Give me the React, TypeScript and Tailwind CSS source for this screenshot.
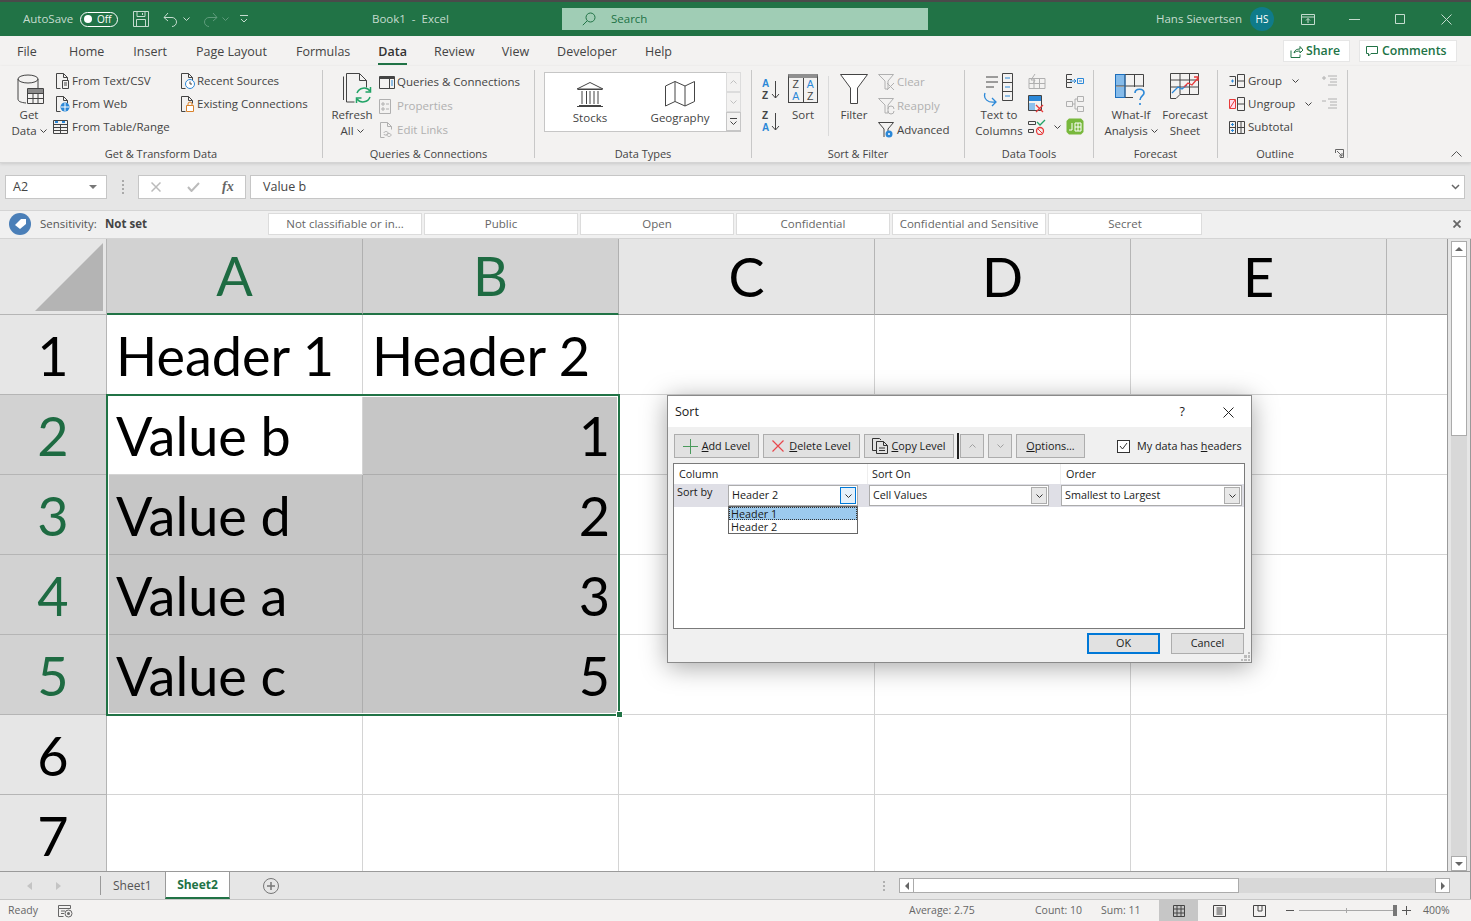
import React from "react";

/* ── small drawing helpers ───────────────────────────── */

type IcoProps = { w?: number; h?: number; children: React.ReactNode; className?: string };

const Ico = ({ w = 16, h = 16, children, className }: IcoProps) => (
  <svg width={w} height={h} viewBox={`0 0 ${w} ${h}`} fill="none" className={"shrink-0 " + (className ?? "")}>
    {children}
  </svg>
);

const Chev = ({ color = "#444", up = false }: { color?: string; up?: boolean }) => (
  <svg width="7" height="4" viewBox="0 0 7 4" fill="none" className="inline-block shrink-0 align-middle">
    <path d={up ? "M.5 3.5 3.5.5l3 3" : "M.5.5l3 3 3-3"} stroke={color} />
  </svg>
);

const DK = "#444";
const DIS = "#b0b0b0";
const BLUE = "#2b88d8";

const Doc = ({ c = DK }: { c?: string }) => <path d="M1.5 15.5v-15h7l4 4v3M8.5.5v4h4M1.5 15.5h4" stroke={c} />;

/* ── ribbon pieces ───────────────────────────────────── */

const Group = ({ width, label, children, labelPad }: { width: number; label: string; children: React.ReactNode; labelPad?: boolean }) => (
  <>
    <div className="flex flex-col shrink-0 relative" style={{ width }}>
      <div className="h-[80px] pt-1 flex">{children}</div>
      <div className={"leading-[16px] text-center text-[11px] text-[#444] " + (labelPad ? "pr-[15px]" : "")}>{label}</div>
    </div>
    <div className="w-px h-[88px] mt-1 bg-[#c8c8c8] shrink-0" />
  </>
);

const Big = ({ icon, lines, chev, width, className, iconH = 37 }: { icon: React.ReactNode; lines: string[]; chev?: boolean; width: number; className?: string; iconH?: number }) => (
  <div className={"flex flex-col items-center shrink-0 " + (className ?? "")} style={{ width }}>
    <div className="flex items-start justify-center" style={{ height: iconH }}>{icon}</div>
    {lines.map((l, i) => (
      <div key={l} className="leading-[16px] text-[11.5px] text-[#444] whitespace-nowrap flex items-center gap-[3px]">
        {l}
        {chev && i === lines.length - 1 && <Chev />}
      </div>
    ))}
  </div>
);

const Small = ({ icon, text, off, tall, iconW = 19 }: { icon: React.ReactNode; text: string; off?: boolean; tall?: boolean; iconW?: number }) => (
  <div className={"flex items-center text-[11.5px] whitespace-nowrap " + (tall ? "h-[24px] " : "h-[23px] ") + (off ? "text-[#b0b0b0]" : "text-[#444]")}>
    <div className="shrink-0 flex items-center" style={{ width: iconW }}>{icon}</div>
    {text}
  </div>
);

const TAB_NAMES = [
  { name: "Home", cls: "" },
  { name: "Insert", cls: "ml-[1px]" },
  { name: "Page Layout", cls: "ml-[1px]" },
  { name: "Formulas", cls: "ml-[1px]" },
  { name: "Data", cls: "" },
  { name: "Review", cls: "-ml-[1px]" },
  { name: "View", cls: "-ml-[1px]" },
  { name: "Developer", cls: "" },
  { name: "Help", cls: "" },
];
const LEVELS = ["Not classifiable or in...", "Public", "Open", "Confidential", "Confidential and Sensitive", "Secret"];

/* ── title bar ───────────────────────────────────────── */

function TitleBar() {
  return (
    <div className="h-[36px] shrink-0 bg-[#217346] border-t-2 border-[#4a4a4a] flex items-center text-[11.5px] text-[#c5dccf]">
      <span className="ml-[23px] w-[57px]">AutoSave</span>
      <div className="w-[38px] h-[15px] rounded-full border border-white flex items-center pl-[3px] gap-[5px] text-white text-[10px]">
        <span className="w-[8px] h-[8px] rounded-full bg-white" />
        Off
      </div>
      <Ico w={16} h={16} className="ml-[15px]">
        <path d="M.5.5h15v15H.5zM4 .5v5h8v-5M3.5 15.5v-7h9v7M9.5 2v2" stroke="#c5dccf" />
      </Ico>
      <Ico w={16} h={16} className="ml-[14px]">
        <path d="M1 6.5h8a4.5 4.5 0 0 1 0 9M1 6.5 5 2M1 6.5 5 10" stroke="#c5dccf" />
      </Ico>
      <span className="ml-[4px] flex"><Chev color="#c5dccf" /></span>
      <Ico w={16} h={16} className="ml-[12px]">
        <path d="M15 6.5H7a4.5 4.5 0 0 0 0 9M15 6.5 11 2M15 6.5 11 10" stroke="#5f9c7c" />
      </Ico>
      <span className="ml-[4px] flex"><Chev color="#5f9c7c" /></span>
      <Ico w={8} h={8} className="ml-[11px]">
        <path d="M0 .5h8M1 4l3 3 3-3" stroke="#c5dccf" />
      </Ico>
      <span className="ml-[124px] w-[190px] whitespace-pre">Book1  -  Excel</span>
      <div className="w-[366px] h-[22px] bg-[#a0cdb5] flex items-center pl-[20px] text-[#217346]">
        <Ico w={14} h={14}>
          <circle cx="8.5" cy="5.5" r="4.5" stroke="#217346" />
          <path d="M5.2 8.8.8 13.2" stroke="#217346" />
        </Ico>
        <span className="ml-[15px]">Search</span>
      </div>
      <span className="ml-[228px] w-[94px] whitespace-nowrap">Hans Sievertsen</span>
      <div className="w-[24px] h-[24px] rounded-full bg-[#0f7b8a] text-white text-[10px] flex items-center justify-center">HS</div>
      <Ico w={14} h={11} className="ml-[27px]">
        <path d="M.5.5h13v10H.5zM.5 3h13M7 9V4.5M5 6.500l2-2 2 2" stroke="#c5dccf" />
      </Ico>
      <Ico w={11} h={1} className="ml-[34px]"><path d="M0 .5h11" stroke="#c5dccf" /></Ico>
      <Ico w={10} h={10} className="ml-[35px]"><path d="M.5.5h9v9h-9z" stroke="#c5dccf" /></Ico>
      <Ico w={11} h={11} className="ml-[36px]"><path d="m.5.5 10 10m0-10-10 10" stroke="#c5dccf" /></Ico>
    </div>
  );
}

/* ── tabs ────────────────────────────────────────────── */

function Tabs() {
  return (
    <div className="h-[30px] shrink-0 bg-[#f3f2f1] flex items-center pl-[17px] text-[12.500px] text-[#444] relative">
      <span className="w-[52px] pt-[2px]">File</span>
      <div className="flex gap-[28px] pt-[2px]">
        {TAB_NAMES.map((t) => (
          <span key={t.name} className={t.cls + (t.name === "Data" ? " relative font-semibold text-[#333]" : "")}>
            {t.name}
            {t.name === "Data" && <span className="absolute left-0 right-0 top-[20px] h-[2px] bg-[#217346]" />}
          </span>
        ))}
      </div>
      <div className="ml-auto mr-[14px] flex gap-[9px] text-[#217346] font-semibold text-[12.300px]">
        <div className="w-[67px] h-[22px] bg-white border border-[#e6e6e6] flex items-center pl-[6px] gap-[3px]">
          <Ico w={13} h={13}>
            <path d="M1 5.500v7h9v-3M4 8c.5-3 3-4 6-4V1.500L13 5l-3 3V6C7.500 6 5.500 6.500 4 8z" stroke="#217346" />
          </Ico>
          Share
        </div>
        <div className="w-[98px] h-[22px] bg-white border border-[#e6e6e6] flex items-center pl-[6px] gap-[4px]">
          <Ico w={12} h={11}>
            <path d="M.5.5h11v7H5L2.500 10V7.500h-2z" stroke="#217346" />
          </Ico>
          Comments
        </div>
      </div>
    </div>
  );
}

/* ── ribbon ──────────────────────────────────────────── */

function Ribbon() {
  return (
    <div className="h-[97px] shrink-0 bg-[#f3f2f1] border-b border-[#d4d4d4] shadow-[0_1px_3px_rgba(0,0,0,0.12)] flex relative z-10">
      <Group width={322} label="Get & Transform Data">
        <Big
          className="ml-[12px]"
          width={34}
          chev
          lines={["Get", "Data"]}
          icon={
            <Ico w={32} h={34} className="mt-[3px]">
              <ellipse cx="15" cy="6" rx="10" ry="4" stroke={DK} />
              <path d="M5 6v20c0 2.500 3 3.500 8 4M25 6v9" stroke={DK} />
              <path d="M14.500 15.500h16v15h-16zM14.500 20.500h16M14.500 25.500h16M20 15.500v15M25 15.500v15" stroke={DK} />
              <path d="M15 16h15v4H15z" fill="#8a8a8a" />
            </Ico>
          }
        />
        <div className="ml-[7px] -mt-[1px] w-[127px]">
          <Small icon={<Ico className="ml-[2px]"><Doc /><path d="M7.500 7.500h6v8h-6zM9 10h3M9 12h3" stroke={DK} /></Ico>} text="From Text/CSV" />
          <Small icon={<Ico className="ml-[2px]"><Doc /><circle cx="10" cy="11" r="4.500" fill={BLUE} /><path d="M6 11h8M10 7v8" stroke="#fff" /></Ico>} text="From Web" />
          <Small icon={<Ico><path d="M.5 1.500h14v13H.5zM.5 5.500h14M.5 8.500h14M.5 11.500h14M7.500 5.500v9" stroke={DK} /><path d="M2 3h3M9 3h3" stroke={BLUE} strokeWidth="2" /></Ico>} text="From Table/Range" />
        </div>
        <div className="-mt-[1px]">
          <Small iconW={17} icon={<Ico><Doc /><circle cx="10" cy="11" r="4.500" fill="#fff" stroke={BLUE} /><path d="M10 8.500V11h2" stroke={DK} /></Ico>} text="Recent Sources" />
          <Small iconW={17} icon={<Ico><Doc /><path d="M6.500 9.500h7v6h-7z" fill="#fff" stroke="#d9822b" /><path d="M8 9.500V8a2 2 0 0 1 4 0v1.500" stroke="#d9822b" /></Ico>} text="Existing Connections" />
        </div>
      </Group>

      <Group width={211} label="Queries & Connections">
        <Big
          className="ml-[9px]"
          width={40}
          chev
          lines={["Refresh", "All"]}
          icon={
            <Ico w={30} h={34} className="mt-[3px] ml-[10px]">
              <path d="M1.500 27V3.500M4.500 29V.5h13l7 7v7M17.500.5v7h7M4.500 29h8" stroke={DK} />
              <path d="M15 20a7.500 7.500 0 0 1 13-2M28 24a7.500 7.500 0 0 1-13 2" stroke="#21a366" strokeWidth="1.500" />
              <path d="M28.500 14v5h-5M14.500 30v-5h5" stroke="#21a366" strokeWidth="1.500" />
            </Ico>
          }
        />
        <div className="ml-[7px]">
          <Small tall iconW={18} icon={<Ico w={16} h={13}><path d="M.5.5h15v12H.5z" stroke={DK} /><path d="M.5 2h15" stroke={DK} strokeWidth="2" /><path d="M10.500 3v9" stroke={DK} /><path d="M12 5h2M12 7h2M12 9h2" stroke={BLUE} /></Ico>} text="Queries & Connections" />
          <Small tall off iconW={18} icon={<Ico w={13} h={15}><path d="M.5.5h11v14H.5zM3 4h2v2H3zM3 9h2v2H3zM7 5h3M7 10h3" stroke={DIS} /></Ico>} text="Properties" />
          <Small tall off iconW={18} icon={<Ico><Doc c={DIS} /><path d="M5 11c0-2 4-2 4 0s-4 3-4 1M8 13c0-2 4-2 4 0s-4 2-4 0" stroke={DIS} /></Ico>} text="Edit Links" />
        </div>
      </Group>

      <Group width={216} label="Data Types">
        <div className="ml-[9px] mt-[2px] w-[197px] h-[60px] bg-white border border-[#c6c6c6] flex">
          <Big
            className="pt-[8px]"
            width={90}
            iconH={29}
            lines={["Stocks"]}
            icon={
              <Ico w={28} h={26}>
                <path d="M1 8 14 1.500 27 8zM2 8.500h24M3 24.500h22M1 25.500h26M6 10v13M10.500 10v13M14 10v13M18 10v13M22 10v13" stroke={DK} />
              </Ico>
            }
          />
          <Big
            className="pt-[8px]"
            width={90}
            iconH={29}
            lines={["Geography"]}
            icon={
              <Ico w={30} h={26}>
                <path d="M.5 5 10 .5l10 4.500L29.500.5V20.500L20 25l-10-4.500L.5 25zM10 .5v20M20 5v20" stroke={DK} />
              </Ico>
            }
          />
          <div className="flex flex-col w-[15px] ml-[1px] -mr-px -mt-px">
            <div className="h-[21px] border border-[#dcdcdc] bg-[#f3f2f1] flex items-center justify-center"><Chev color="#c0c0c0" up /></div>
            <div className="h-[20px] border border-[#dcdcdc] bg-[#f3f2f1] flex items-center justify-center"><Chev color="#c0c0c0" /></div>
            <div className="h-[20px] border border-[#c6c6c6] bg-[#f3f2f1] flex flex-col items-center justify-center gap-[2px]">
              <span className="w-[7px] h-px bg-[#444]" />
              <Chev />
            </div>
          </div>
        </div>
      </Group>

      <Group width={212} label="Sort & Filter">
        <div className="ml-[10px] w-[18px] flex flex-col gap-[9px] pt-[8px] font-['Liberation_Sans',sans-serif] text-[10px] leading-[11.5px] font-bold">
          <div className="flex items-center h-[23px]">
            <div className="w-[9px]"><div className="text-[#2b88d8]">A</div><div className="text-[#444]">Z</div></div>
            <Ico w={9} h={18}><path d="M4.500 0v17M1 13l3.500 4L8 13" stroke={DK} /></Ico>
          </div>
          <div className="flex items-center h-[23px]">
            <div className="w-[9px]"><div className="text-[#444]">Z</div><div className="text-[#2b88d8]">A</div></div>
            <Ico w={9} h={18}><path d="M4.500 0v17M1 13l3.500 4L8 13" stroke={DK} /></Ico>
          </div>
        </div>
        <Big
          className="ml-[8px]"
          width={30}
          lines={["Sort"]}
          icon={
            <div className="w-[30px] h-[29px] mt-[4px] border border-[#444] border-t-[4px] border-t-[#8f8f8f] flex font-['Liberation_Sans',sans-serif] text-[10.5px] leading-[12px] text-center">
              <div className="flex-1 border-r border-[#444]"><div className="text-[#444]">Z</div><div className="text-[#2b88d8]">A</div></div>
              <div className="flex-1"><div className="text-[#2b88d8]">A</div><div className="text-[#444]">Z</div></div>
            </div>
          }
        />
        <div className="ml-[10px] w-px h-[60px] mt-[6px] bg-[#dadada] shrink-0" />
        <Big
          className="ml-[8px]"
          width={34}
          lines={["Filter"]}
          icon={
            <Ico w={28} h={30} className="mt-[4px]">
              <path d="M.5.5h27L17.500 14v15.500h-7V14z" fill="#fff" stroke={DK} />
            </Ico>
          }
        />
        <div className="ml-[7px]">
          <Small tall off icon={<Ico w={17} h={17}><path d="M.5.5h15L10 7v8H7V7zM9 9l7 7m0-7-7 7" stroke={DIS} /></Ico>} text="Clear" />
          <Small tall off icon={<Ico w={17} h={17}><path d="M.5.5h15L10 7v8H7V7zM10 11a3 3 0 0 1 6 0M16 13a3 3 0 0 1-6 0" stroke={DIS} /></Ico>} text="Reapply" />
          <Small tall icon={<Ico w={17} h={17}><path d="M.5.5h15L10 7v2M6 15V7L.5.5" stroke={DK} /><circle cx="11" cy="12" r="3.500" fill={BLUE} /><circle cx="11" cy="12" r="1" fill="#fff" /></Ico>} text="Advanced" />
        </div>
      </Group>

      <Group width={128} label="Data Tools">
        <Big
          className="ml-[10px]"
          width={48}
          lines={["Text to", "Columns"]}
          icon={
            <Ico w={32} h={34} className="mt-[3px]">
              <path d="M3 4h12M3 9h12M3 14h8" stroke={DK} />
              <path d="M2 20c-2 6 3 10 10 9M9 25l4 4-4 4" stroke={BLUE} strokeWidth="1.300" />
              <path d="M19.500.5h10v27h-10zM19.500 9.500h10M19.500 18.500h10" stroke={DK} />
              <path d="M22 5h5M22 14h5M22 23h5" stroke={BLUE} />
            </Ico>
          }
        />
        <div className="ml-[5px] -mt-[1px] w-[38px] flex flex-col">
          <div className="h-[23px] flex items-center">
            <Ico w={18} h={16}><path d="M1 5.500h16v10H1zM1 10.500h16M6 5.500v10M11.500 5.500v10M7 1 3 7h4l-2 4" stroke={DIS} /></Ico>
          </div>
          <div className="h-[23px] flex items-center">
            <Ico w={16} h={18}><path d="M.5.500h13v15H.5z" stroke={DK} /><path d="M1 1h12v5H1z" fill={BLUE} /><path d="M1 8h6v7H1z" fill="#8cc0ec" /><path d="m8 10 7 7m0-7-7 7" stroke="#e83a3a" strokeWidth="1.300" /></Ico>
          </div>
          <div className="h-[23px] flex items-center gap-[8px]">
            <Ico w={18} h={16}><path d="M.5 2.500h7v3h-7zM.5 10.500h5v3h-5z" stroke={DK} /><path d="m9 3 3 3 5-5" stroke="#21a366" strokeWidth="1.300" /><circle cx="12" cy="12" r="3.500" stroke="#e83a3a" strokeWidth="1.300" /><path d="m9.500 9.500 5 5" stroke="#e83a3a" /></Ico>
            <Chev />
          </div>
        </div>
        <div className="flex flex-col -mt-[1px]">
          <div className="h-[23px] flex items-center">
            <Ico w={18} h={14}><path d="M6 .5H.5v5H6M6 8.500H.5v5H6M.5 5.500v3" stroke={DK} /><path d="M4 7h6M8 5l2 2-2 2" stroke={BLUE} /><path d="M11.500 4.500h6v5h-6zM13 7h3" stroke={BLUE} /></Ico>
          </div>
          <div className="h-[23px] flex items-center">
            <Ico w={18} h={16}><path d="M.5 5.500h6v5h-6zM11.500.5h6v5h-6zM11.500 10.500h6v5h-6zM6.500 8h2.500V3h2.500M9 8v5h2.500" stroke={DIS} /></Ico>
          </div>
          <div className="h-[23px] flex items-center">
            <Ico w={18} h={17}>
              <path d="M3 .5h12l2.500 2.500v11L15 16.500H3L.5 14V3z" fill="#78b83c" />
              <path d="M6 5v7H3M9 5h6v8H9zM9 9h6M12 5v8" stroke="#fff" />
            </Ico>
          </div>
        </div>
      </Group>

      <Group width={123} label="Forecast">
        <Big
          className="ml-[10px]"
          width={54}
          chev
          lines={["What-If", "Analysis"]}
          icon={
            <Ico w={32} h={34} className="mt-[4px]">
              <path d="M1 1h9v11H1zM1 13h9v11H1z" fill="#85bbea" />
              <path d="M.5.500h28v23H.5zM.5 12h28M10 .5v23M19.500 .5v23" stroke="#444" />
              <path d="M.5.500h9.500v23H.5z" stroke="#1a6fbf" />
              <rect x="18" y="13" width="13" height="20" fill="#f3f2f1" />
              <path d="M20 19c0-5 9-5 9 0 0 3-4 3-4 7M25 29v2" stroke={BLUE} strokeWidth="1.600" />
            </Ico>
          }
        />
        <Big
          className="ml-[4px]"
          width={46}
          lines={["Forecast", "Sheet"]}
          icon={
            <Ico w={30} h={30} className="mt-[3px]">
              <path d="M.5.500h28v21H10L6 25.500H.5zM.5 7h28M.5 14h28M10 .5v21M19.500 .5v21" stroke={DK} />
              <path d="M2 20 8 14l4 2 5-4" stroke={BLUE} strokeWidth="1.300" />
              <path d="m14 14 4-4 4 2 6-7M24 4h4v4" stroke="#e83a3a" strokeWidth="1.300" />
            </Ico>
          }
        />
      </Group>

      <Group width={129} label="Outline" labelPad>
        <div className="ml-[11px] -mt-[1px] w-[93px]">
          <div className="h-[23px] flex items-center text-[11.5px] text-[#444]">
            <Ico w={19} h={16}><path d="M.5 3.500h6v9h-6M8.500 1.500h7v13h-7zM8.500 8h7" stroke={DK} /><path d="M2 8h3M3.500 6.500v3" stroke={BLUE} /></Ico>
            Group
            <span className="ml-[10px] flex"><Chev /></span>
          </div>
          <div className="h-[23px] flex items-center text-[11.5px] text-[#444]">
            <Ico w={19} h={16}><path d="M.5 3.500h6v9h-6z" fill="#fde" stroke="#e83a3a" /><path d="m1 12 5-8" stroke="#e83a3a" /><path d="M8.500 1.500h7v13h-7zM8.500 8h7" stroke={DK} /></Ico>
            Ungroup
            <span className="ml-[10px] flex"><Chev /></span>
          </div>
          <div className="h-[23px] flex items-center text-[11.5px] text-[#444]">
            <Ico w={19} h={16}><path d="M.5 2.500h6v12h-6zM.5 8.500h6M8.500 2.500h7v12h-7zM8.500 8.500h7M12 2.500v12" stroke={DK} /><path d="M2 5.500h3M3.500 4v3M2 11.500h3M3.500 10v3" stroke={BLUE} /></Ico>
            Subtotal
          </div>
        </div>
        <div className="-mt-[1px]">
          <div className="h-[23px] flex items-center">
            <Ico w={15} h={11}><path d="M6 1h9M8 4h7M8 7h7M6 10h9" stroke={DIS} /><path d="M0 3h4M2 1v4" stroke={DIS} /></Ico>
          </div>
          <div className="h-[23px] flex items-center">
            <Ico w={15} h={11}><path d="M6 1h9M8 4h7M8 7h7M6 10h9" stroke={DIS} /><path d="M0 3h4" stroke={DIS} /></Ico>
          </div>
        </div>
        <Ico w={9} h={9} className="absolute right-[3px] bottom-[4px]">
          <path d="M.5 4V.5H8.500V8.500H5M2 2l5 5M7 4v3H4" stroke="#666" />
        </Ico>
      </Group>

      <div className="flex-1 flex items-end justify-end pr-[9px] pb-[5px]">
        <svg width="11" height="6" viewBox="0 0 11 6" fill="none"><path d="m.5 5.500 5-5 5 5" stroke="#555" /></svg>
      </div>
    </div>
  );
}

/* ── formula + sensitivity bars ──────────────────────── */

function FormulaBar() {
  return (
    <div className="h-[47px] shrink-0 bg-[#e6e6e6] flex items-center pl-[5px] pr-[6px] text-[12.500px] text-[#444]">
      <div className="w-[102px] h-[24px] bg-white border border-[#c6c6c6] flex items-center pl-[7px] pr-[9px] justify-between">
        <span className="pt-[1px]">A2</span>
        <span className="w-0 h-0 border-x-[4px] border-x-transparent border-t-[4px] border-t-[#777]" />
      </div>
      <div className="w-[31px] flex flex-col items-center gap-[2px]">
        <span className="w-[2px] h-[2px] bg-[#aaa]" />
        <span className="w-[2px] h-[2px] bg-[#aaa]" />
        <span className="w-[2px] h-[2px] bg-[#aaa]" />
        <span className="w-[2px] h-[2px] bg-[#aaa]" />
      </div>
      <div className="w-[108px] h-[24px] bg-white border border-[#c6c6c6] flex items-center pl-[12px] gap-[26px]">
        <Ico w={10} h={10}><path d="m.5.5 9 9m0-9-9 9" stroke="#bbb" strokeWidth="1.500" /></Ico>
        <Ico w={13} h={10}><path d="m1 5 3.500 4L12 1" stroke="#bbb" strokeWidth="2" /></Ico>
        <span className="-ml-[4px] font-['Liberation_Serif',serif] italic font-bold text-[14px] text-[#666]">fx</span>
      </div>
      <div className="ml-[4px] flex-1 h-[24px] bg-white border border-[#c6c6c6] flex items-center pl-[12px] pr-[4px] justify-between">
        <span className="pt-[1px]">Value b</span>
        <svg width="9" height="6" viewBox="0 0 9 6" fill="none"><path d="m1 1 3.500 3.500L8 1" stroke="#666" strokeWidth="1.500" /></svg>
      </div>
    </div>
  );
}

function SensitivityBar() {
  return (
    <div className="h-[29px] shrink-0 bg-[#f0f0f0] border-y border-[#d4d4d4] flex items-center pb-[1px] text-[11.5px] text-[#555]">
      <div className="ml-[9px] w-[22px] h-[22px] rounded-full bg-[#4a7fb8] flex items-center justify-center">
        <Ico w={13} h={12}><path d="M1 7 7 1h5v5l-6 5z" fill="#fff" /></Ico>
      </div>
      <span className="ml-[9px] w-[65px]">Sensitivity:</span>
      <span className="w-[163px] font-bold text-[#444]">Not set</span>
      <div className="flex gap-[2px]">
        {LEVELS.map((l) => (
          <div key={l} className="w-[154px] h-[22px] bg-white border border-[#dcdcdc] flex items-center justify-center text-[#666] whitespace-nowrap">{l}</div>
        ))}
      </div>
      <Ico w={8} h={8} className="ml-[251px]"><path d="m.5.5 7 7m0-7-7 7" stroke="#666" strokeWidth="1.800" /></Ico>
    </div>
  );
}

/* ── sheet grid ──────────────────────────────────────── */

const COLS = ["A", "B", "C", "D", "E"];
const ROWS: [string, string][] = [
  ["Header 1", "Header 2"],
  ["Value b", "1"],
  ["Value d", "2"],
  ["Value a", "3"],
  ["Value c", "5"],
  ["", ""],
  ["", ""],
];

function Sheet() {
  return (
    <div className="h-[632px] shrink-0 bg-[#e6e6e6] flex relative overflow-hidden border-r border-[#999]">
      <div className="w-[1448px] shrink-0 overflow-hidden border-r border-[#9a9a9a] font-['Lato',sans-serif] grid grid-cols-[107px_repeat(5,256px)_1fr] grid-rows-[76px_repeat(7,80px)]">
        <div className="flex items-end justify-end pr-[3px] pb-[3px] border-r border-b border-[#b5b5b5]">
          <div className="w-[68px] h-[68px] bg-[#b4b4b4] [clip-path:polygon(100%_0,100%_100%,0_100%)]" />
        </div>
        {COLS.map((c, i) => (
          <div
            key={c}
            className={
              "flex items-center justify-center text-[54px] leading-none border-r " +
              (i < 2 ? "bg-[#d2d2d2] text-[#1e6b42] border-[#b0b0b0] border-b-2 border-b-[#217346]" : "text-black border-[#b5b5b5] border-b border-b-[#9e9e9e]")
            }
          >
            {c}
          </div>
        ))}
        <div className="border-b border-[#9e9e9e]" />
        {ROWS.map((r, ri) => {
          const sel = ri >= 1 && ri <= 4;
          return (
            <React.Fragment key={ri}>
              <div className={"flex items-center justify-center pt-[2px] text-[54px] leading-none border-r border-b border-[#b5b5b5] " + (sel ? "bg-[#d2d2d2] text-[#1e6b42]" : "text-black")}>
                {ri + 1}
              </div>
              {COLS.map((_, ci) => {
                const val = ci < 2 ? r[ci] : "";
                const filled = sel && ci < 2 && !(ri === 1 && ci === 0);
                const num = ci === 1 && sel;
                return (
                  <div
                    key={ci}
                    className={
                      "flex items-center pt-[2px] text-[54px] leading-none text-black border-r border-b whitespace-nowrap " +
                      (filled ? "bg-[#c6c6c6] border-[#adadad] " : "bg-white border-[#d4d4d4] ") +
                      (num ? "justify-end pr-[8px]" : "pl-[9px]")
                    }
                  >
                    {val}
                  </div>
                );
              })}
              <div className="bg-white border-b border-[#d4d4d4]" />
            </React.Fragment>
          );
        })}
      </div>

      {/* selection outline sits over the cells */}
      <div className="absolute left-[106px] top-[155px] w-[514px] h-[322px] border-2 border-[#217346] shadow-[inset_0_0_0_1px_#fff]" />
      <div className="absolute left-[616px] top-[472px] w-[7px] h-[7px] bg-[#217346] border border-white" />

      <div className="w-[16px] ml-[3px] flex flex-col pt-[2px] shrink-0">
        <div className="h-[16px] bg-white border border-[#ababab] flex items-center justify-center">
          <span className="w-0 h-0 border-x-[4px] border-x-transparent border-b-[4px] border-b-[#666]" />
        </div>
        <div className="h-[179px] bg-white border-x border-b border-[#ababab]" />
        <div className="flex-1 bg-[#d8d8d8]" />
        <div className="h-[15px] bg-white border border-[#ababab] flex items-center justify-center">
          <span className="w-0 h-0 border-x-[4px] border-x-transparent border-t-[4px] border-t-[#666]" />
        </div>
      </div>
    </div>
  );
}

/* ── sheet tabs + status bar ─────────────────────────── */

function SheetTabs() {
  return (
    <div className="h-[28px] shrink-0 bg-[#e6e6e6] border-t border-[#9a9a9a] flex items-center text-[12px] text-[#555] border-r-[1px] border-r-[#999]">
      <span className="ml-[27px] w-0 h-0 border-y-[4px] border-y-transparent border-r-[5px] border-r-[#c4c4c4]" />
      <span className="ml-[24px] w-0 h-0 border-y-[4px] border-y-transparent border-l-[5px] border-l-[#c4c4c4]" />
      <span className="ml-[39px] w-px h-[19px] bg-[#9a9a9a]" />
      <span className="ml-[12px] w-[52px]">Sheet1</span>
      <div className="w-[65px] h-[27px] -mt-px bg-white border-x border-[#9a9a9a] border-b-2 border-b-[#217346] flex items-center justify-center font-bold text-[#217346]">
        <span className="pt-[1px]">Sheet2</span>
      </div>
      <div className="ml-[33px] w-[16px] h-[16px] rounded-full border-[1.5px] border-[#777] flex items-center justify-center">
        <Ico w={8} h={8}><path d="M4 0v8M0 4h8" stroke="#777" strokeWidth="1.500" /></Ico>
      </div>
      <div className="ml-[604px] flex flex-col gap-[2px]">
        <span className="w-[2px] h-[2px] bg-[#b0b0b0]" />
        <span className="w-[2px] h-[2px] bg-[#b0b0b0]" />
        <span className="w-[2px] h-[2px] bg-[#b0b0b0]" />
      </div>
      <div className="ml-[14px] w-[551px] h-[15px] bg-[#d8d8d8] flex">
        <div className="w-[15px] bg-white border border-[#ababab] flex items-center justify-center">
          <span className="w-0 h-0 border-y-[4px] border-y-transparent border-r-[4px] border-r-[#666]" />
        </div>
        <div className="w-[325px] bg-white border-y border-r border-[#ababab]" />
        <div className="flex-1" />
        <div className="w-[15px] bg-white border border-[#ababab] flex items-center justify-center">
          <span className="w-0 h-0 border-y-[4px] border-y-transparent border-l-[4px] border-l-[#666]" />
        </div>
      </div>
    </div>
  );
}

function StatusBar() {
  return (
    <div className="flex-1 bg-[#f3f2f1] border-t border-[#c6c6c6] flex items-center text-[10.5px] text-[#666]">
      <span className="ml-[8px] w-[50px]">Ready</span>
      <Ico w={15} h={14}>
        <path d="M.5 1.500h12v3H.5zM.5 4.500v8h5M3 7h4M3 9.500h3" stroke="#666" />
        <circle cx="10.500" cy="9.500" r="3.500" stroke="#666" />
        <circle cx="10.500" cy="9.500" r="1.500" fill="#666" />
      </Ico>
      <span className="ml-[836px] w-[126px]">Average: 2.75</span>
      <span className="w-[66px]">Count: 10</span>
      <span className="w-[58px]">Sum: 11</span>
      <div className="w-[39px] h-full bg-[#c6c6c6] flex items-center justify-center">
        <Ico w={12} h={12}><path d="M.5.5h11v11H.5zM.5 4h11M.5 8h11M4 .5v11M8 .5v11" stroke="#444" /></Ico>
      </div>
      <Ico w={13} h={12} className="ml-[15px]"><path d="M.5.5h12v11H.5zM3.500 3h6M3.500 5h6M3.500 7h6M3.500 9h6" stroke="#444" /></Ico>
      <Ico w={13} h={12} className="ml-[27px]"><path d="M.5.5h12v11H.5zM5 .5V6h4V.5" stroke="#444" /></Ico>
      <span className="ml-[20px] w-[8px] h-px bg-[#555]" />
      <div className="ml-[5px] w-[94px] h-px bg-[#a8a8a8] flex justify-center items-center">
        <span className="w-px h-[5px] bg-[#a8a8a8]" />
      </div>
      <span className="w-[4px] h-[11px] bg-[#777]" />
      <span className="ml-[5px]"><Ico w={9} h={9}><path d="M4.500 0v9M0 4.500h9" stroke="#555" /></Ico></span>
      <span className="ml-[12px]">400%</span>
    </div>
  );
}

/* ── sort dialog ─────────────────────────────────────── */

const Btn = ({ className, children }: { className?: string; children: React.ReactNode }) => (
  <div className={"h-[24px] bg-[#e1e1e1] border border-[#adadad] flex items-center justify-center shrink-0 " + (className ?? "")}>{children}</div>
);

const Combo = ({ text, width, focus }: { text: string; width: number; focus?: boolean }) => (
  <div className="h-[21px] bg-white border border-[#acacac] flex items-center justify-between pl-[3px] pr-[1px] shrink-0" style={{ width }}>
    {text}
    <span className={"w-[16px] h-[17px] flex items-center justify-center border " + (focus ? "border-[#0078d7] bg-[#e5f1fb]" : "border-[#acacac] bg-[#e8e8e8]")}>
      <Chev color="#333" />
    </span>
  </div>
);

function SortDialog() {
  return (
    <div className="absolute left-[667px] top-[395px] w-[585px] h-[268px] bg-[#f0f0f0] border border-[#8a8a8a] shadow-[0_4px_24px_rgba(0,0,0,0.35)] text-[10.8px] text-[#1a1a1a] flex flex-col z-20 font-['Open_Sans',sans-serif]">
      <div className="h-[31px] shrink-0 bg-white flex items-center pl-[7px] pt-[2px] text-[12.500px]">
        <span className="flex-1">Sort</span>
        <span className="mr-[38px] text-[12.500px]">?</span>
        <Ico w={11} h={11} className="mr-[17px]"><path d="m.5.5 10 10m0-10-10 10" stroke="#222" /></Ico>
      </div>

      <div className="flex items-center pl-[6px] pt-[6px] gap-[4px]">
        <Btn className="w-[85px] gap-[4px]">
          <Ico w={15} h={15}><path d="M7.500 0v15M0 7.500h15" stroke="#4a9a5c" /></Ico>
          <span><u>A</u>dd Level</span>
        </Btn>
        <Btn className="w-[97px] gap-[5px]">
          <Ico w={12} h={12}><path d="m.5.5 11 11m0-11-11 11" stroke="#e8474c" strokeWidth="1.200" /></Ico>
          <span><u>D</u>elete Level</span>
        </Btn>
        <Btn className="w-[90px] gap-[2px]">
          <Ico w={17} h={16}><path d="M4.500 12.500h-4V.5h7L9 2" stroke="#333" /><path d="M4.500 3.500h7l4 4v8h-11zM11.500 3.500v4h4M7 10h6M7 12.500h6" stroke="#333" /></Ico>
          <span><u>C</u>opy Level</span>
        </Btn>
        <span className="w-[2px] h-[26px] -ml-[1px] -mr-[3px] bg-[#222] shrink-0" />
        <Btn className="w-[24px]"><Chev color="#a0a0a0" up /></Btn>
        <Btn className="w-[24px]"><Chev color="#a0a0a0" /></Btn>
        <Btn className="w-[69px]"><span><u>O</u>ptions...</span></Btn>
        <span className="ml-[28px] w-[13px] h-[13px] bg-white border border-[#333] flex items-center justify-center shrink-0">
          <Ico w={9} h={8}><path d="m1 4 2.500 3L8 1" stroke="#333" /></Ico>
        </span>
        <span className="ml-[3px] whitespace-nowrap">My data has <u>h</u>eaders</span>
      </div>

      <div className="ml-[5px] mt-[4px] w-[572px] h-[166px] bg-white border border-[#7a7a7a] shrink-0 relative">
        <div className="h-[20px] flex">
          <span className="w-[194px] pl-[5px] border-r border-[#eee] flex items-center">Column</span>
          <span className="w-[193px] pl-[4px] border-r border-[#eee] flex items-center">Sort On</span>
          <span className="pl-[5px] flex items-center">Order</span>
        </div>
        <div className="h-[23px] bg-[#dfdfe6] flex items-center pl-[3px]">
          <span className="w-[51px] self-start">Sort by</span>
          <Combo text="Header 2" width={130} focus />
          <span className="w-[11px]" />
          <Combo text="Cell Values" width={180} />
          <span className="w-[12px]" />
          <Combo text="Smallest to Largest" width={181} />
        </div>
        {/* open drop-down list lies over the empty rows */}
        <div className="absolute left-[54px] top-[42px] w-[130px] h-[28px] bg-white border border-[#666] leading-[13px] pl-0">
          <div className="h-[13px] bg-[#9ccaee] outline-1 outline-dotted outline-[#333] -outline-offset-1 pl-[2px]">Header 1</div>
          <div className="h-[13px] pl-[2px]">Header 2</div>
        </div>
      </div>

      <div className="flex justify-end pr-[7px] pt-[4px] gap-[11px] relative">
        <div className="w-[73px] h-[21px] bg-[#e1e1e1] border-2 border-[#0078d7] flex items-center justify-center">OK</div>
        <div className="w-[73px] h-[21px] bg-[#e1e1e1] border border-[#adadad] flex items-center justify-center">Cancel</div>
      </div>
      <div className="absolute right-[1px] bottom-[1px] w-[9px] h-[9px] grid grid-cols-3 gap-px">
        <span /><span /><span className="bg-[#bbb]" />
        <span /><span className="bg-[#bbb]" /><span className="bg-[#bbb]" />
        <span className="bg-[#bbb]" /><span className="bg-[#bbb]" /><span className="bg-[#bbb]" />
      </div>
    </div>
  );
}

export default function App() {
  return (
    <div className="w-[1471px] h-[921px] overflow-hidden relative flex flex-col font-['Open_Sans',sans-serif]">
      <TitleBar />
      <Tabs />
      <Ribbon />
      <FormulaBar />
      <SensitivityBar />
      <Sheet />
      <SheetTabs />
      <StatusBar />
      <SortDialog />
    </div>
  );
}
